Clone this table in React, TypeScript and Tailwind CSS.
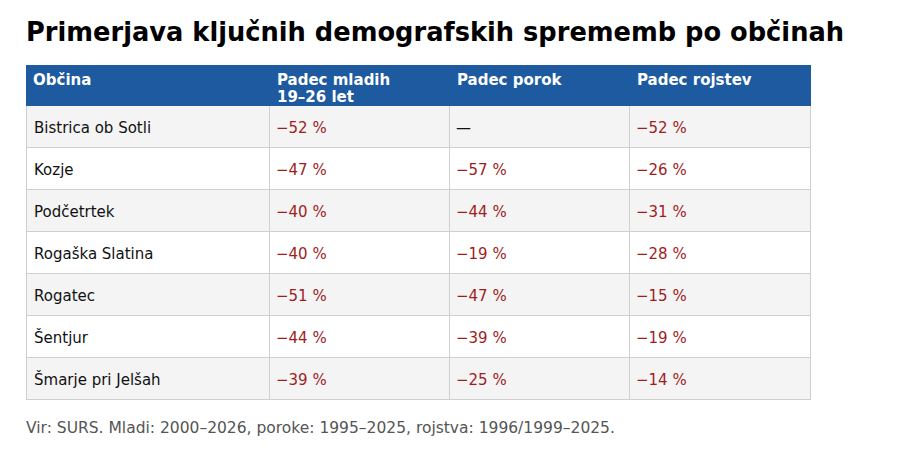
const rows = [
  { name: 'Bistrica ob Sotli', mladi: '−52 %', poroke: '—', rojstva: '−52 %' },
  { name: 'Kozje', mladi: '−47 %', poroke: '−57 %', rojstva: '−26 %' },
  { name: 'Podčetrtek', mladi: '−40 %', poroke: '−44 %', rojstva: '−31 %' },
  { name: 'Rogaška Slatina', mladi: '−40 %', poroke: '−19 %', rojstva: '−28 %' },
  { name: 'Rogatec', mladi: '−51 %', poroke: '−47 %', rojstva: '−15 %' },
  { name: 'Šentjur', mladi: '−44 %', poroke: '−39 %', rojstva: '−19 %' },
  { name: 'Šmarje pri Jelšah', mladi: '−39 %', poroke: '−25 %', rojstva: '−14 %' },
];

function Value({ v }: { v: string }) {
  return <span className={v === '—' ? 'text-[#111]' : 'text-[#a11d1d]'}>{v}</span>;
}

export default function App() {
  return (
    <div className="w-[900px] h-[450px] bg-white px-[26px] pt-[14px] font-['DejaVu_Sans',sans-serif] text-[#111]">
      <h1 className="text-[25.7px] font-bold leading-[36px] text-black">
        Primerjava ključnih demografskih sprememb po občinah
      </h1>

      <div className="mt-[15px] w-[785px] grid grid-cols-[244px_180px_180px_181px] text-[15px]">
        <div className="bg-[#1d5a9f] text-white font-bold leading-[17px] h-[41px] pt-[7px] px-[7px]">Občina</div>
        <div className="bg-[#1d5a9f] text-white font-bold leading-[17px] h-[41px] pt-[7px] px-[7px]">
          Padec mladih
          <br />
          19–26 let
        </div>
        <div className="bg-[#1d5a9f] text-white font-bold leading-[17px] h-[41px] pt-[7px] px-[7px]">Padec porok</div>
        <div className="bg-[#1d5a9f] text-white font-bold leading-[17px] h-[41px] pt-[7px] px-[7px]">Padec rojstev</div>

        {rows.map((r, i) => {
          const bg = i % 2 === 0 ? 'bg-[#f4f4f4]' : 'bg-white';
          return (
            <div key={r.name} className="contents">
              <div className={`${bg} h-[42px] flex items-center pt-[3px] px-[7px] border-l border-b border-r border-[#cfcfcf]`}>{r.name}</div>
              <div className={`${bg} h-[42px] flex items-center pt-[3px] px-[6px] border-b border-r border-[#cfcfcf]`}><Value v={r.mladi} /></div>
              <div className={`${bg} h-[42px] flex items-center pt-[3px] px-[6px] border-b border-r border-[#cfcfcf]`}><Value v={r.poroke} /></div>
              <div className={`${bg} h-[42px] flex items-center pt-[3px] px-[6px] border-b border-r border-[#cfcfcf]`}><Value v={r.rojstva} /></div>
            </div>
          );
        })}
      </div>

      <p className="mt-[17px] text-[15.5px] text-[#555]">
        Vir: SURS. Mladi: 2000–2026, poroke: 1995–2025, rojstva: 1996/1999–2025.
      </p>
    </div>
  );
}
